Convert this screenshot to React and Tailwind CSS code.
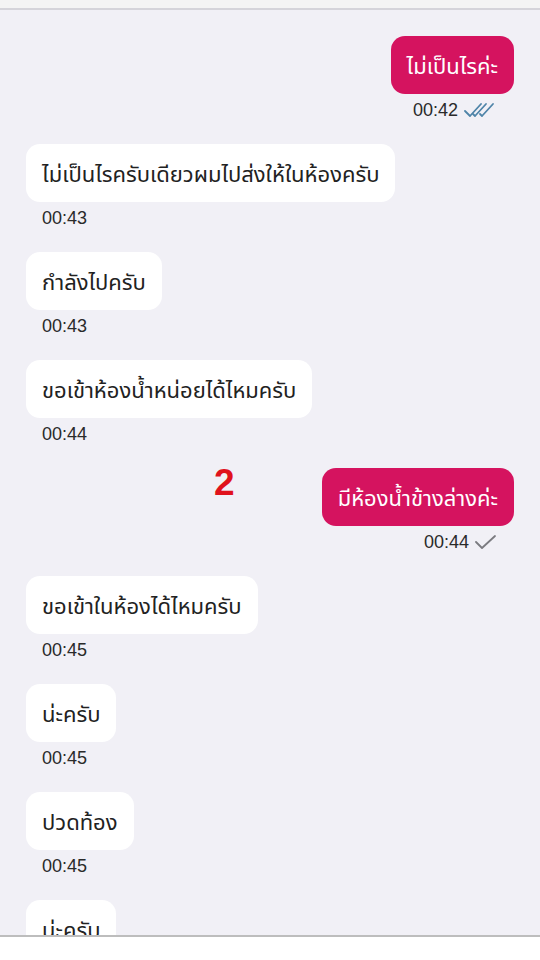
import React from "react";

const msgs = [
  { side: "r", text: "ไม่เป็นไรค่ะ", time: "00:42", check: "double" },
  { side: "l", text: "ไม่เป็นไรครับเดียวผมไปส่งให้ในห้องครับ", time: "00:43" },
  { side: "l", text: "กำลังไปครับ", time: "00:43" },
  { side: "l", text: "ขอเข้าห้องน้ำหน่อยได้ไหมครับ", time: "00:44" },
  { side: "r", text: "มีห้องน้ำข้างล่างค่ะ", time: "00:44", check: "single", mark: true },
  { side: "l", text: "ขอเข้าในห้องได้ไหมครับ", time: "00:45" },
  { side: "l", text: "น่ะครับ", time: "00:45" },
  { side: "l", text: "ปวดท้อง", time: "00:45" },
  { side: "l", text: "น่ะครับ", time: "00:45" },
];

function DoubleCheck() {
  return (
    <svg width="33" height="16" viewBox="0 0 33 16" fill="none" stroke="#4f84a8" strokeWidth="1.8" strokeLinecap="round" strokeLinejoin="round">
      <path d="M1 9 L6 14 L17 2" />
      <path d="M9 12 L11 14 L22 2" />
      <path d="M16 12 L18 14 L29 2" />
    </svg>
  );
}

function SingleCheck() {
  return (
    <svg width="22" height="16" viewBox="0 0 22 16" fill="none" stroke="#7b7b80" strokeWidth="1.8" strokeLinecap="round" strokeLinejoin="round">
      <path d="M1 8 L7 14 L20 2" />
    </svg>
  );
}

export default function App() {
  return (
    <div className="w-[540px] h-[960px] flex flex-col bg-white overflow-hidden" style={{ fontFamily: '"Noto Sans", "Noto Sans Thai", "Liberation Sans", sans-serif' }}>
      <div className="h-[10px] bg-[#f4f4f4] border-b-2 border-[#d5d4da] shrink-0" />
      <div className="relative flex-1 bg-[#f1f0f6] overflow-hidden flex flex-col pt-[26px] px-[26px] gap-[22px] border-b-2 border-[#bdbdbd]">
        {msgs.map((m, i) => (
          <div key={i} className={`relative flex flex-col shrink-0 ${m.side === "r" ? "items-end" : "items-start"}`}>
            {m.mark && (
              <div className="absolute left-[188px] top-[-4px] text-[37px] font-bold text-[#e0121c] leading-none" style={{ fontFamily: '"Liberation Sans", sans-serif' }}>2</div>
            )}
            <div
              className={`h-[58px] flex items-center px-[16px] rounded-[14px] text-[22px] ${
                m.side === "r" ? "bg-[#d5135f] text-white" : "bg-white text-[#222]"
              }`}
            >
              {m.text}
            </div>
            <div className={`h-[24px] mt-[4px] flex items-center gap-[6px] text-[18px] text-[#2a2a2a] ${m.side === "r" ? "pr-[17px]" : "pl-[16px]"}`} style={{ fontFamily: '"Liberation Sans", sans-serif' }}>
              <span>{m.time}</span>
              {m.check === "double" && <DoubleCheck />}
              {m.check === "single" && <SingleCheck />}
            </div>
          </div>
        ))}
      </div>
      <div className="h-[23px] bg-white shrink-0" />
    </div>
  );
}
